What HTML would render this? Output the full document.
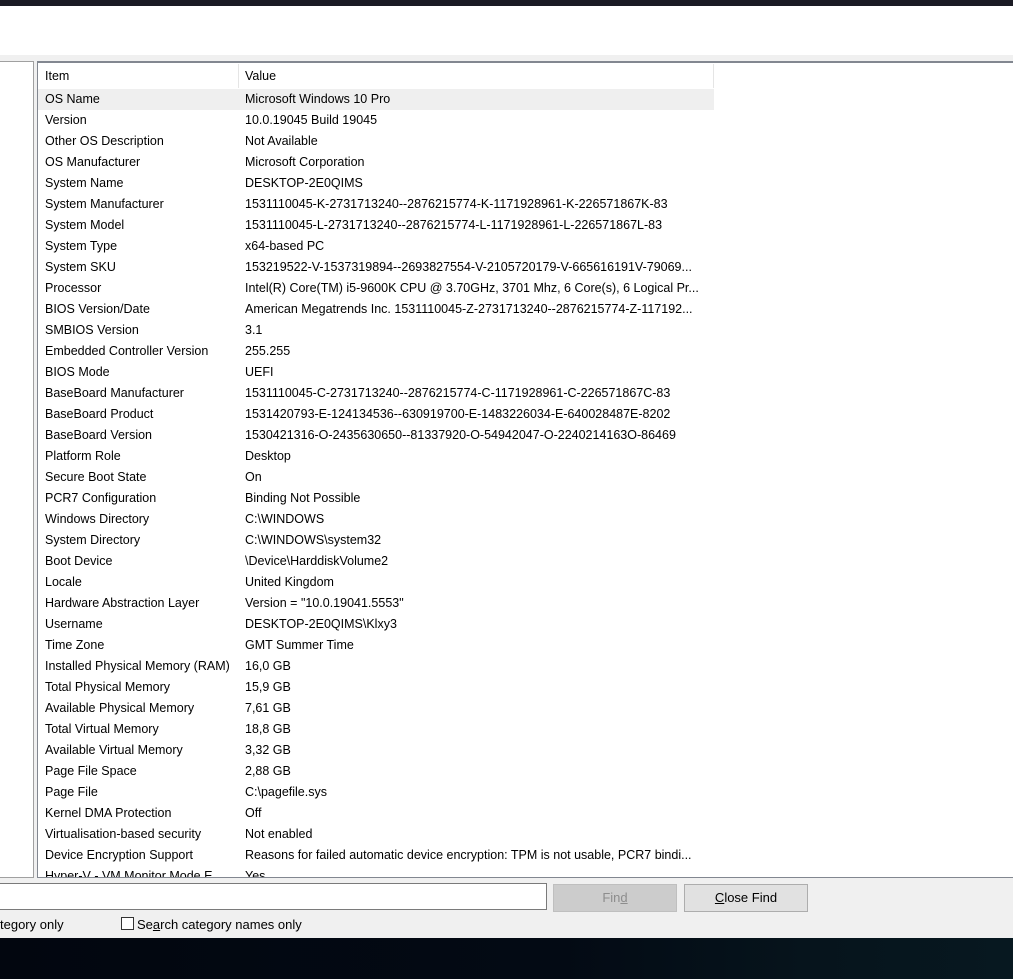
<!DOCTYPE html>
<html><head><meta charset="utf-8"><style>
*{margin:0;padding:0;box-sizing:border-box}
body{width:1013px;height:979px;overflow:hidden;background:#f0f0f0;font-family:"Liberation Sans",sans-serif;font-size:12.5px;color:#000;position:relative}
.top{position:absolute;left:0;top:0;width:1013px;height:6px;background:#1a1a24}
.white{position:absolute;left:0;top:6px;width:1013px;height:49px;background:#fff}
.left{position:absolute;left:-2px;top:61px;width:36px;height:817px;background:#fff;border:1px solid #a0a0a0}
.right{position:absolute;left:37px;top:61px;width:980px;height:817px;background:#fff;border-top:2px solid #828790;border-left:1px solid #828790;border-bottom:1px solid #828790;overflow:hidden}
.hdr{position:absolute;left:0;top:0;height:26px;width:676px;}
.hdr .c1{position:absolute;left:7px;top:6px}
.hdr .c2{position:absolute;left:207px;top:6px}
.hdr .sep{position:absolute;left:200px;top:1px;width:1px;height:24px;background:#e5e5e5}
.hdr .sep2{position:absolute;left:675px;top:1px;width:1px;height:24px;background:#e5e5e5}
.row{position:absolute;left:0;height:21px;width:676px;white-space:nowrap}
.row span{position:absolute;top:3px}
.row .a{left:7px}.row .b{left:207px}
.sel{background:#efefef}
.tb{position:absolute;left:-2px;top:883px;width:549px;height:27px;background:#fff;border:1px solid #7a7a7a}
.btn{position:absolute;top:884px;height:28px;width:124px;border:1px solid #adadad;background:#e1e1e1;text-align:center;line-height:26px;font-size:13px}
.dis{background:#cccccc;border-color:#bfbfbf;color:#8d8d8d}
.cb{position:absolute;top:917px;left:121px;width:13px;height:13px;border:1px solid #333;background:#fff}
.lbl{position:absolute;top:917px;font-size:13px}
.bot{position:absolute;left:0;top:938px;width:1013px;height:41px;background:linear-gradient(90deg,#02060f 0%,#030a14 55%,#06141c 80%,#071820 100%)}
</style></head><body>
<div class="top"></div>
<div class="white"></div>
<div class="left"></div>
<div class="right">
<div class="hdr"><span class="c1">Item</span><div class="sep"></div><span class="c2">Value</span><div class="sep2"></div></div>
<div class="row sel" style="top:26px"><span class="a">OS Name</span><span class="b">Microsoft Windows 10 Pro</span></div>
<div class="row" style="top:47px"><span class="a">Version</span><span class="b">10.0.19045 Build 19045</span></div>
<div class="row" style="top:68px"><span class="a">Other OS Description</span><span class="b">Not Available</span></div>
<div class="row" style="top:89px"><span class="a">OS Manufacturer</span><span class="b">Microsoft Corporation</span></div>
<div class="row" style="top:110px"><span class="a">System Name</span><span class="b">DESKTOP-2E0QIMS</span></div>
<div class="row" style="top:131px"><span class="a">System Manufacturer</span><span class="b">1531110045-K-2731713240--2876215774-K-1171928961-K-226571867K-83</span></div>
<div class="row" style="top:152px"><span class="a">System Model</span><span class="b">1531110045-L-2731713240--2876215774-L-1171928961-L-226571867L-83</span></div>
<div class="row" style="top:173px"><span class="a">System Type</span><span class="b">x64-based PC</span></div>
<div class="row" style="top:194px"><span class="a">System SKU</span><span class="b">153219522-V-1537319894--2693827554-V-2105720179-V-665616191V-79069...</span></div>
<div class="row" style="top:215px"><span class="a">Processor</span><span class="b">Intel(R) Core(TM) i5-9600K CPU @ 3.70GHz, 3701 Mhz, 6 Core(s), 6 Logical Pr...</span></div>
<div class="row" style="top:236px"><span class="a">BIOS Version/Date</span><span class="b">American Megatrends Inc. 1531110045-Z-2731713240--2876215774-Z-117192...</span></div>
<div class="row" style="top:257px"><span class="a">SMBIOS Version</span><span class="b">3.1</span></div>
<div class="row" style="top:278px"><span class="a">Embedded Controller Version</span><span class="b">255.255</span></div>
<div class="row" style="top:299px"><span class="a">BIOS Mode</span><span class="b">UEFI</span></div>
<div class="row" style="top:320px"><span class="a">BaseBoard Manufacturer</span><span class="b">1531110045-C-2731713240--2876215774-C-1171928961-C-226571867C-83</span></div>
<div class="row" style="top:341px"><span class="a">BaseBoard Product</span><span class="b">1531420793-E-124134536--630919700-E-1483226034-E-640028487E-8202</span></div>
<div class="row" style="top:362px"><span class="a">BaseBoard Version</span><span class="b">1530421316-O-2435630650--81337920-O-54942047-O-2240214163O-86469</span></div>
<div class="row" style="top:383px"><span class="a">Platform Role</span><span class="b">Desktop</span></div>
<div class="row" style="top:404px"><span class="a">Secure Boot State</span><span class="b">On</span></div>
<div class="row" style="top:425px"><span class="a">PCR7 Configuration</span><span class="b">Binding Not Possible</span></div>
<div class="row" style="top:446px"><span class="a">Windows Directory</span><span class="b">C:\WINDOWS</span></div>
<div class="row" style="top:467px"><span class="a">System Directory</span><span class="b">C:\WINDOWS\system32</span></div>
<div class="row" style="top:488px"><span class="a">Boot Device</span><span class="b">\Device\HarddiskVolume2</span></div>
<div class="row" style="top:509px"><span class="a">Locale</span><span class="b">United Kingdom</span></div>
<div class="row" style="top:530px"><span class="a">Hardware Abstraction Layer</span><span class="b">Version = "10.0.19041.5553"</span></div>
<div class="row" style="top:551px"><span class="a">Username</span><span class="b">DESKTOP-2E0QIMS\Klxy3</span></div>
<div class="row" style="top:572px"><span class="a">Time Zone</span><span class="b">GMT Summer Time</span></div>
<div class="row" style="top:593px"><span class="a">Installed Physical Memory (RAM)</span><span class="b">16,0 GB</span></div>
<div class="row" style="top:614px"><span class="a">Total Physical Memory</span><span class="b">15,9 GB</span></div>
<div class="row" style="top:635px"><span class="a">Available Physical Memory</span><span class="b">7,61 GB</span></div>
<div class="row" style="top:656px"><span class="a">Total Virtual Memory</span><span class="b">18,8 GB</span></div>
<div class="row" style="top:677px"><span class="a">Available Virtual Memory</span><span class="b">3,32 GB</span></div>
<div class="row" style="top:698px"><span class="a">Page File Space</span><span class="b">2,88 GB</span></div>
<div class="row" style="top:719px"><span class="a">Page File</span><span class="b">C:\pagefile.sys</span></div>
<div class="row" style="top:740px"><span class="a">Kernel DMA Protection</span><span class="b">Off</span></div>
<div class="row" style="top:761px"><span class="a">Virtualisation-based security</span><span class="b">Not enabled</span></div>
<div class="row" style="top:782px"><span class="a">Device Encryption Support</span><span class="b">Reasons for failed automatic device encryption: TPM is not usable, PCR7 bindi...</span></div>
<div class="row" style="top:803px"><span class="a">Hyper-V - VM Monitor Mode E...</span><span class="b">Yes</span></div>
</div>
<div class="tb"></div>
<div class="btn dis" style="left:553px">Fin<u>d</u></div>
<div class="btn" style="left:684px"><u>C</u>lose Find</div>
<div class="lbl" style="left:0">tegory only</div>
<div class="cb"></div>
<div class="lbl" style="left:137px">Se<u>a</u>rch category names only</div>
<div class="bot"></div>
</body></html>
